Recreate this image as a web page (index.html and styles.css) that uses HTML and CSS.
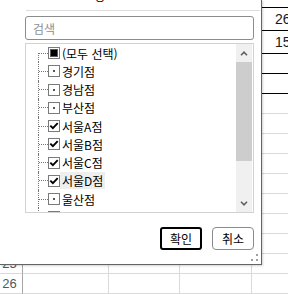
FILE: index.html
```html
<!DOCTYPE html>
<html lang="ko">
<head>
    <meta charset="UTF-8">
    <meta name="viewport" content="width=device-width, initial-scale=1.0">
    <title>필터</title>
    <link rel="stylesheet" href="styles.css">
</head>
<body>
    <div class="sheet">
        <div class="row h8"><div class="hd"></div><div class="c"></div><div class="c"></div><div class="c"></div><div class="c last boxed"></div></div>
        <div class="row h23"><div class="hd"></div><div class="c"></div><div class="c"></div><div class="c"></div><div class="c last boxed">26</div></div>
        <div class="row h23"><div class="hd"></div><div class="c"></div><div class="c"></div><div class="c"></div><div class="c last boxed">15</div></div>
        <div class="row"><div class="hd"></div><div class="c"></div><div class="c"></div><div class="c"></div><div class="c last boxed"></div></div>
        <div class="row"><div class="hd"></div><div class="c"></div><div class="c"></div><div class="c"></div><div class="c last boxed"></div></div>
        <div class="row"><div class="hd"></div><div class="c"></div><div class="c"></div><div class="c"></div><div class="c last"></div></div>
        <div class="row"><div class="hd"></div><div class="c"></div><div class="c"></div><div class="c"></div><div class="c last"></div></div>
        <div class="row"><div class="hd"></div><div class="c"></div><div class="c"></div><div class="c"></div><div class="c last"></div></div>
        <div class="row"><div class="hd"></div><div class="c"></div><div class="c"></div><div class="c"></div><div class="c last"></div></div>
        <div class="row"><div class="hd"></div><div class="c"></div><div class="c"></div><div class="c"></div><div class="c last"></div></div>
        <div class="row"><div class="hd"></div><div class="c"></div><div class="c"></div><div class="c"></div><div class="c last"></div></div>
        <div class="row"><div class="hd"></div><div class="c"></div><div class="c"></div><div class="c"></div><div class="c last"></div></div>
        <div class="row"><div class="hd"></div><div class="c"></div><div class="c"></div><div class="c"></div><div class="c last"></div></div>
        <div class="row"><div class="hd">25</div><div class="c"></div><div class="c"></div><div class="c"></div><div class="c last"></div></div>
        <div class="row"><div class="hd">26</div><div class="c"></div><div class="c"></div><div class="c"></div><div class="c last"></div></div>
    </div>

    <div class="filter-panel">
        <div class="menu-tail"><span>정</span></div>
        <div class="sep"></div>
        <input class="search" type="text" placeholder="검색">

        <div class="listbox">
            <div class="items">
                <div class="item"><span class="branch first"></span><span class="cb mixed"></span><span class="label">(모두 선택)</span></div>
                <div class="item"><span class="branch"></span><span class="cb off"></span><span class="label">경기점</span></div>
                <div class="item"><span class="branch"></span><span class="cb off"></span><span class="label">경남점</span></div>
                <div class="item"><span class="branch"></span><span class="cb off"></span><span class="label">부산점</span></div>
                <div class="item"><span class="branch"></span><span class="cb on"><svg viewBox="0 0 10 10"><polyline points="1.3,4.6 3.9,7.2 8.7,2.2"/></svg></span><span class="label">서울A점</span></div>
                <div class="item"><span class="branch"></span><span class="cb on"><svg viewBox="0 0 10 10"><polyline points="1.3,4.6 3.9,7.2 8.7,2.2"/></svg></span><span class="label">서울B점</span></div>
                <div class="item"><span class="branch"></span><span class="cb on"><svg viewBox="0 0 10 10"><polyline points="1.3,4.6 3.9,7.2 8.7,2.2"/></svg></span><span class="label">서울C점</span></div>
                <div class="item"><span class="branch"></span><span class="cb on"><svg viewBox="0 0 10 10"><polyline points="1.3,4.6 3.9,7.2 8.7,2.2"/></svg></span><span class="label hover">서울D점</span></div>
                <div class="item"><span class="branch"></span><span class="cb off"></span><span class="label">울산점</span></div>
                <div class="item"><span class="branch"></span><span class="cb off"></span><span class="label">전남점</span></div>
            </div>
            <div class="scroll">
                <div class="arrow"><svg viewBox="0 0 8 5"><polyline points="1,4.2 4,1.2 7,4.2"/></svg></div>
                <div class="thumb"></div>
                <div class="track"></div>
                <div class="arrow"><svg viewBox="0 0 8 5"><polyline points="1,0.8 4,3.8 7,0.8"/></svg></div>
            </div>
        </div>

        <div class="actions">
            <button class="btn ok">확인</button>
            <button class="btn cancel">취소</button>
        </div>

        <svg class="grip" viewBox="0 0 8 8">
            <rect x="5" y="0" width="2" height="2"/>
            <rect x="0" y="5" width="2" height="2"/>
            <rect x="5" y="5" width="2" height="2"/>
        </svg>
    </div>
</body>
</html>
```

FILE: styles.css
```css
* {
    margin: 0;
    padding: 0;
    box-sizing: border-box;
}

body {
    background-color: #ffffff;
    width: 288px;
    height: 294px;
    overflow: hidden;
    position: relative;
    font-family: "Noto Sans CJK KR", "Noto Sans", sans-serif;
    color: #000000;
}

/* 시트 */
.sheet {
    display: flex;
    flex-direction: column;
}

.row {
    display: grid;
    grid-template-columns: 23px 86px 71px 72px 1fr;
    height: 20px;
}

.row.h8 {
    height: 8px;
}

.row.h23 {
    height: 23px;
}

.hd {
    border-right: 1px solid #a6a6a6;
    border-bottom: 1px solid #d9d9d9;
    font-family: "Liberation Sans", Arial, sans-serif;
    font-size: 13px;
    color: #4f5966;
    display: flex;
    align-items: center;
    justify-content: center;
    padding-right: 3px;
}

.c {
    border-right: 1px solid #dadada;
    border-bottom: 1px solid #dadada;
    font-family: "Liberation Sans", Arial, sans-serif;
    font-size: 14px;
    color: #1a1a1a;
    display: flex;
    align-items: center;
}

.c.last {
    border-right: none;
    padding-left: 23px;
}

.c.boxed {
    border-bottom-color: #000000;
}

/* 필터 패널 */
.filter-panel {
    position: absolute;
    top: 0;
    left: 0;
    width: 262px;
    height: 265px;
    background-color: #ffffff;
    border-right: 1px solid #646464;
    border-bottom: 1px solid #646464;
    box-shadow: 1px 1px 2px rgba(0, 0, 0, 0.18);
    padding: 0 7px 0 25px;
    display: flex;
    flex-direction: column;
}

.menu-tail {
    height: 10px;
    overflow: hidden;
    font-size: 12px;
    line-height: 16px;
    padding-left: 69px;
}

.menu-tail span {
    display: block;
    margin-top: -12px;
    color: #000000;
}

.sep {
    height: 1px;
    background-color: #dcdcdc;
    margin: 0 -6px 0 1px;
}

.search {
    margin-top: 5px;
    height: 24px;
    width: 100%;
    border: 1px solid #8c8c8c;
    border-radius: 3px;
    padding-left: 7px;
    font-family: "Noto Sans CJK KR", sans-serif;
    font-size: 12px;
    outline: none;
}

.search::placeholder {
    color: #8f8f8f;
}

.listbox {
    margin-top: 3px;
    height: 170px;
    border: 1px solid #d2d2d2;
    display: flex;
    overflow: hidden;
}

.items {
    flex: 1;
    padding-left: 12px;
}

.item {
    height: 18.25px;
    display: flex;
    align-items: center;
    font-size: 12px;
}

.branch {
    width: 10px;
    align-self: stretch;
    border-left: 1px dotted #777777;
    display: flex;
    align-items: center;
}

.branch::after {
    content: '';
    width: 9px;
    border-top: 1px dotted #777777;
}

.branch.first {
    border-left: none;
    padding-left: 1px;
    background: repeating-linear-gradient(to bottom, #777777 0 1px, transparent 1px 2px) left bottom / 1px 50% no-repeat;
}

.cb {
    width: 12px;
    height: 12px;
    border: 1px solid #7a7a7a;
    background-color: #ffffff;
    display: flex;
    align-items: center;
    justify-content: center;
}

.cb.mixed::after {
    content: '';
    width: 6px;
    height: 6px;
    background-color: #000000;
    box-shadow: 0 0 0 1px #5a5a5a;
}

.cb.off::after {
    content: '';
    width: 2px;
    height: 2px;
    background-color: #555555;
}

.cb svg {
    width: 10px;
    height: 10px;
}

.cb svg polyline {
    fill: none;
    stroke: #000000;
    stroke-width: 1.9;
}

.label {
    padding: 0 2px;
    line-height: 17px;
}

.label.hover {
    background-color: #eeeeee;
}

.scroll {
    width: 16px;
    margin-right: 1px;
    background-color: #f0f0f0;
    display: flex;
    flex-direction: column;
}

.arrow {
    height: 18px;
    display: flex;
    align-items: center;
    justify-content: center;
}

.arrow svg {
    width: 8px;
    height: 5px;
}

.arrow svg polyline {
    fill: none;
    stroke: #606060;
    stroke-width: 1.6;
}

.thumb {
    height: 99px;
    background-color: #cdcdcd;
}

.track {
    flex: 1;
}

.actions {
    margin-top: 14px;
    display: flex;
    justify-content: flex-end;
    gap: 10px;
}

.btn {
    width: 42px;
    height: 23px;
    background-color: #ffffff;
    font-family: "Noto Sans CJK KR", sans-serif;
    font-size: 12px;
    color: #000000;
}

.btn.ok {
    border: 2px solid #000000;
    border-radius: 3px;
}

.btn.cancel {
    border: 1px solid #8a8a8a;
    border-radius: 4px;
}

.grip {
    position: absolute;
    right: 2px;
    bottom: 2px;
    width: 8px;
    height: 8px;
    fill: #a0a0a0;
}
```
